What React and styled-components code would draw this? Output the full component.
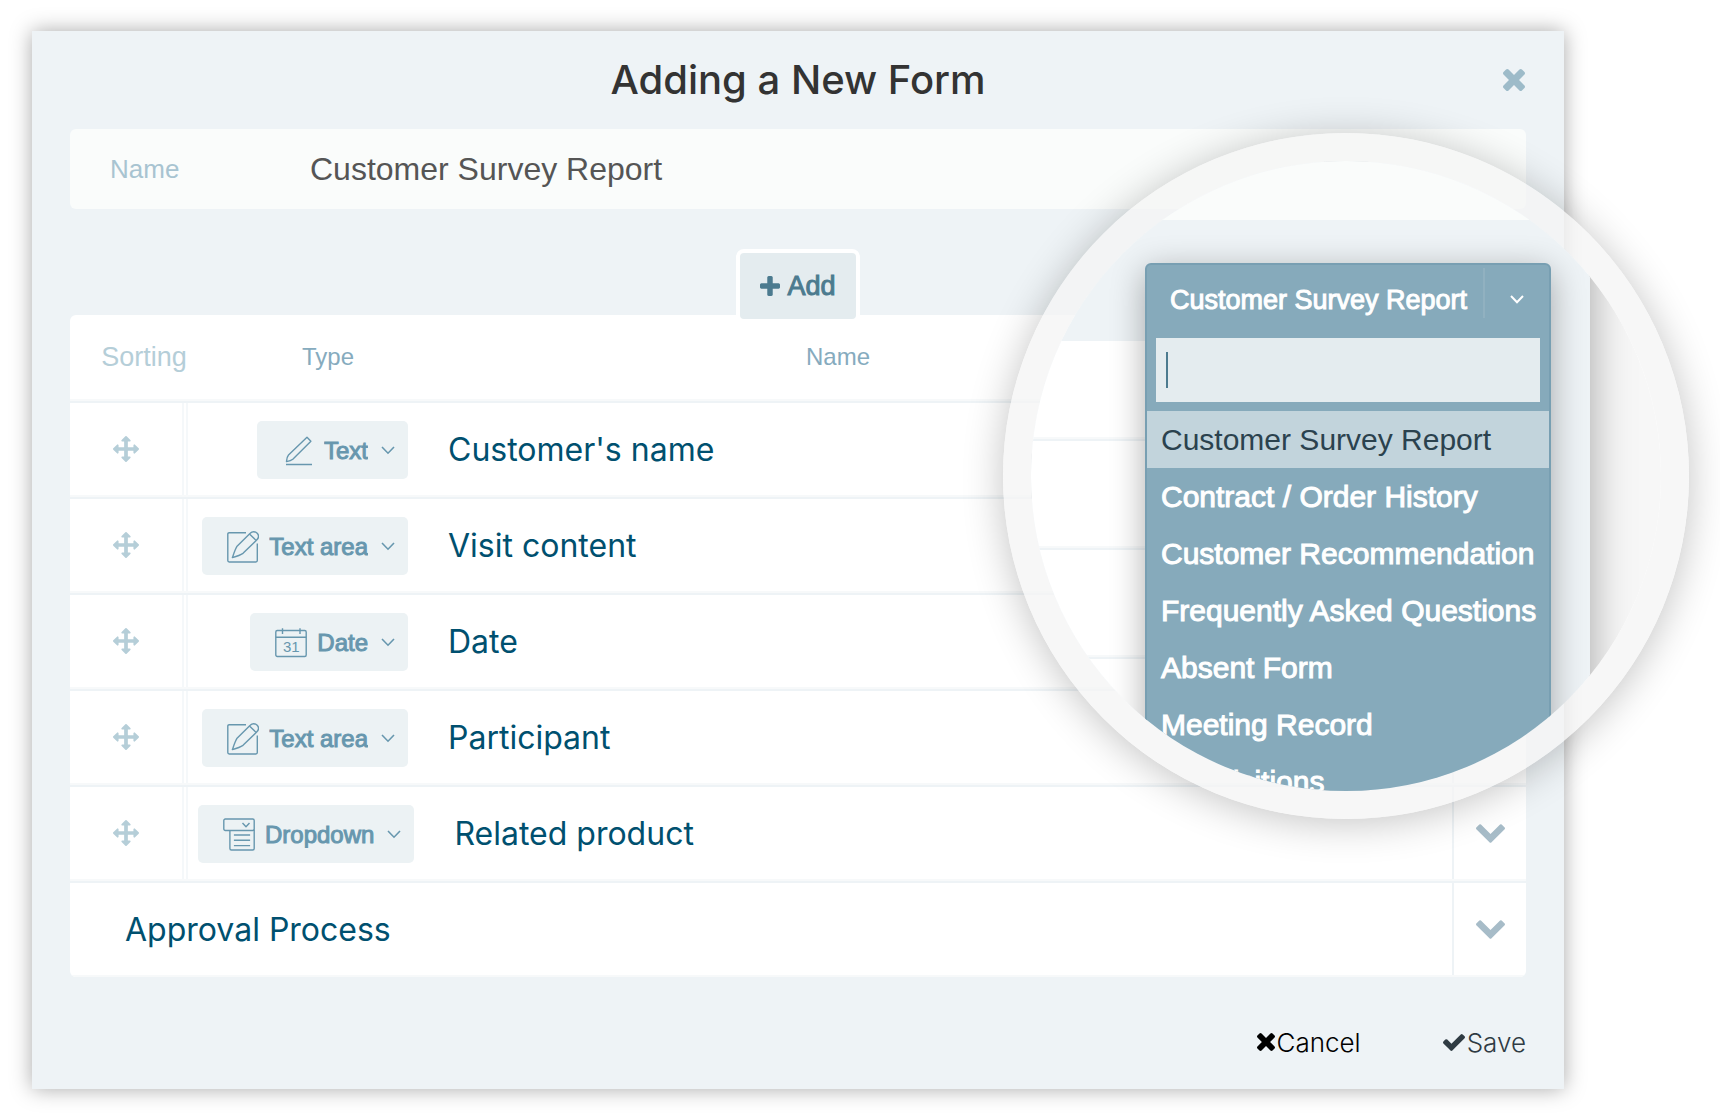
import React from "react";
import styled, { createGlobalStyle } from "styled-components";

const GlobalStyle = createGlobalStyle`
  *, *::before, *::after {
    box-sizing: border-box;
  }
  body {
    margin: 0;
    background: #fff;
    font-family: "Liberation Sans", Arial, sans-serif;
    overflow-x: hidden;
  }
  button, input, select {
    font-family: inherit;
    margin: 0;
    padding: 0;
    border: none;
    background: transparent;
  }
  button {
    cursor: pointer;
  }
`;

const Page = styled.div`
  padding: 31px 156px 31px 32px;
`;

const Modal = styled.form`
  position: relative;
  padding: 0 38px;
  background: #eef3f6;
  box-shadow: 0 0 20px rgba(0, 0, 0, 0.34);
`;

const Header = styled.header`
  display: grid;
  grid-template-columns: 24px 1fr 24px;
  align-items: center;
  height: 98px;
`;

const Title = styled.h1`
  grid-column: 2;
  margin: 0;
  color: #333;
  font-family: Inter, sans-serif;
  font-size: 40px;
  line-height: 48px;
  font-weight: 500;
  text-align: center;
`;

const CloseButton = styled.button`
  display: flex;
  justify-content: center;
  color: #9dbbc9;
`;

const NameField = styled.label`
  display: flex;
  align-items: center;
  height: 80px;
  padding: 0 40px;
  border-radius: 6px;
  background: #fafcfb;
`;

const FieldLabel = styled.span`
  width: 200px;
  color: #a8c4d1;
  font-size: 26px;
`;

const FieldInput = styled.input`
  flex: 1;
  color: #555;
  font-size: 32px;
  outline: none;
`;

const AddButton = styled.button`
  position: relative;
  display: flex;
  align-items: center;
  justify-content: center;
  gap: 7px;
  width: 124px;
  height: 74px;
  margin: 40px auto -8px;
  border: 4px solid #fff;
  border-radius: 8px;
  background: #e4ecef;
  color: #4c7b8f;
  font-size: 27px;
  -webkit-text-stroke: 1px;
`;

const Fields = styled.table`
  display: block;
  border-radius: 6px;
  background: #fff;
  overflow: hidden;

  thead, tbody {
    display: block;
  }
`;

const Row = styled.tr`
  display: flex;
  height: ${({ $head }) => ($head ? 88 : 96)}px;
  padding-bottom: 2px;
  border-bottom: 2px solid #eef3f6;
  box-shadow: inset 0 -2px #f7f9fa;

  &:last-child {
    ${({ $last }) => $last && "height: 94px; border-bottom: none;"}
  }
`;

const HeadCell = styled.th`
  display: flex;
  align-items: center;
  justify-content: center;
  flex: ${({ $width }) => ($width ? `0 0 ${$width}px` : "1")};
  padding: 0;
  color: ${({ $faded }) => ($faded ? "#b5ced8" : "#86abbe")};
  font-size: ${({ $faded }) => ($faded ? 27 : 24)}px;
  font-weight: normal;
`;

const SortCell = styled.td`
  display: flex;
  align-items: center;
  justify-content: center;
  flex: 0 0 118px;
  padding: 0;
  border-right: 6px double #f5f8fa;
  color: #b5ced8;
`;

const TypeCell = styled.td`
  display: flex;
  align-items: center;
  justify-content: flex-end;
  min-width: 220px;
  padding: 2px 0 0 10px;
`;

const NameCell = styled.td`
  display: flex;
  align-items: center;
  flex: 1;
  padding: 0 0 0 ${({ $wide }) => ($wide ? 55 : 40)}px;
  color: #00506f;
  font-family: Inter, sans-serif;
  font-size: 32px;
`;

const ToggleCell = styled.td`
  display: flex;
  flex: 0 0 74px;
  padding: 0;
  border-left: 2px solid #eef3f6;
`;

const ToggleButton = styled.button`
  display: flex;
  align-items: center;
  justify-content: center;
  width: 100%;
  color: #a7bcc8;
`;

const Chip = styled.label`
  display: flex;
  align-items: center;
  height: 58px;
  padding: 0 13px 0 25px;
  border-radius: 5px;
  background: #ecf2f4;
  color: #6797ae;
`;

const ChipSelect = styled.select`
  appearance: none;
  field-sizing: content;
  margin: 0 13px 0 10px;
  color: inherit;
  font-size: 24px;
  -webkit-text-stroke: 1px;
  outline: none;
`;

const Footer = styled.footer`
  display: flex;
  align-items: center;
  justify-content: flex-end;
  gap: 82px;
  height: 112px;
  padding-top: 18px;
`;

const FooterButton = styled.button`
  display: flex;
  align-items: center;
  gap: 2px;
  color: ${({ $color }) => $color};
  font-family: Inter, sans-serif;
  font-size: 26px;
  font-weight: 300;
`;

const Lens = styled.aside`
  position: absolute;
  top: 102px;
  right: -125px;
  width: 686px;
  height: 686px;
  border: 28px solid rgba(244, 244, 244, 0.76);
  border-radius: 50%;
  box-shadow: 0 4px 40px rgba(0, 0, 0, 0.24);
`;

const LensView = styled.div`
  position: relative;
  height: 100%;
  border-radius: 50%;
  background: #f7f7f7;
  overflow: hidden;
`;

const ZoomedModal = styled.div`
  width: 559px;
  height: 100%;
  background: #eef3f6;
  box-shadow: 0 0 40px rgba(0, 0, 0, 0.34);
`;

const ZoomedField = styled.div`
  height: 59px;
  margin-right: 44px;
  background: #fafcfb;
`;

const ZoomedTable = styled.div`
  margin: 121px 44px 0 0;
  background: #fff;
`;

const ZoomedRow = styled.div`
  height: ${({ $head }) => ($head ? 100 : 109)}px;
  border-bottom: 2px solid #eef3f6;
  box-shadow: inset 0 -2px #f7f9fa;
`;

const Dropdown = styled.div`
  position: absolute;
  top: 102px;
  left: 114px;
  width: 406px;
  border: 2px solid #789fb2;
  border-radius: 6px;
  background: #86aabb;
  box-shadow: 0 8px 34px rgba(0, 0, 0, 0.32);
`;

const DropdownHeader = styled.button`
  display: flex;
  align-items: flex-start;
  width: 100%;
  height: 70px;
  padding-top: 3px;
  color: #fff;
`;

const DropdownValue = styled.span`
  flex: 1;
  padding-left: 23px;
  font-size: 27px;
  line-height: 64px;
  text-align: left;
  white-space: nowrap;
  -webkit-text-stroke: 1px;
`;

const DropdownArrow = styled.span`
  display: flex;
  justify-content: center;
  width: 66px;
  height: 50px;
  padding-top: 27px;
  border-left: 2px solid #91b1c0;
`;

const SearchBox = styled.div`
  display: flex;
  align-items: center;
  height: 64px;
  margin: 3px 9px 9px;
  padding: 0 10px;
  background: #e4ecef;
`;

const Caret = styled.i`
  flex: 0 0 2px;
  height: 36px;
  background: #4c7b8f;
`;

const SearchInput = styled.input`
  flex: 1;
  min-width: 0;
  font-size: 30px;
  outline: none;
`;

const Options = styled.ul`
  margin: 0;
  padding: 0;
  list-style: none;
`;

const Option = styled.li`
  height: 57px;
  padding-left: 14px;
  background: ${({ $selected }) => ($selected ? "#c2d4dc" : "transparent")};
  color: ${({ $selected }) => ($selected ? "#2b424e" : "#fff")};
  font-size: 30px;
  line-height: 57px;
  white-space: nowrap;
  -webkit-text-stroke: ${({ $selected }) => ($selected ? 0 : 1)}px;
`;

const TimesIcon = ({ size }) => (
  <svg width={size} height={size} viewBox="302 302 1188 1188" fill="currentColor" aria-hidden="true">
    <path
      transform="translate(0 -64)"
      d="M1490 1322q0 40-28 68l-136 136q-28 28-68 28t-68-28l-294-294-294 294q-28 28-68 28t-68-28l-136-136q-28-28-28-68t28-68l294-294-294-294q-28-28-28-68t28-68l136-136q28-28 68-28t68 28l294 294 294-294q28-28 68-28t68 28l136 136q28 28 28 68t-28 68l-294 294 294 294q28 28 28 68z"
    />
  </svg>
);

const PlusIcon = () => (
  <svg width="20" height="20" viewBox="192 128 1408 1408" fill="currentColor" aria-hidden="true">
    <path d="M1600 736v192q0 40-28 68t-68 28h-416v416q0 40-28 68t-68 28h-192q-40 0-68-28t-28-68v-416h-416q-40 0-68-28t-28-68v-192q0-40 28-68t68-28h416v-416q0-40 28-68t68-28h192q40 0 68 28t28 68v416h416q40 0 68 28t28 68z" />
  </svg>
);

const CheckIcon = () => (
  <svg width="22" height="18" viewBox="121 270 1550 1252" fill="currentColor" aria-hidden="true">
    <path d="M1671 566q0 40-28 68l-724 724-136 136q-28 28-68 28t-68-28l-136-136-362-362q-28-28-28-68t28-68l136-136q28-28 68-28t68 28l294 295 656-657q28-28 68-28t68 28l136 136q28 28 28 68z" />
  </svg>
);

const MoveIcon = () => (
  <svg width="26" height="26" viewBox="0 0 1792 1792" fill="currentColor" aria-hidden="true">
    <path d="M1792 896q0 26-19 45l-256 256q-19 19-45 19t-45-19-19-45v-128h-384v384h128q26 0 45 19t19 45-19 45l-256 256q-19 19-45 19t-45-19l-256-256q-19-19-19-45t19-45 45-19h128v-384h-384v128q0 26-19 45t-45 19-45-19l-256-256q-19-19-19-45t19-45l256-256q19-19 45-19t45 19 19 45v128h384v-384h-128q-26 0-45-19t-19-45 19-45l256-256q19-19 45-19t45 19l256 256q19 19 19 45t-19 45-45 19h-128v384h384v-128q0-26 19-45t45-19 45 19l256 256q19 19 19 45z" />
  </svg>
);

const ChevronIcon = () => (
  <svg width="29" height="19" viewBox="90 533 1612 1035" fill="currentColor" aria-hidden="true">
    <path d="M1683 808l-742 741q-19 19-45 19t-45-19l-742-741q-19-19-19-45.5t19-45.5l166-165q19-19 45-19t45 19l531 531 531-531q19-19 45-19t45 19l166 165q19 19 19 45.5t-19 45.5z" />
  </svg>
);

const AngleIcon = ({ width = 2 }) => (
  <svg width="14" height="9" viewBox="0 0 14 9" fill="none" stroke="currentColor" strokeWidth={width} aria-hidden="true">
    <path d="M1 1l6 6.2L13 1" />
  </svg>
);

const LineIcon = ({ children }) => (
  <svg
    width="32"
    height="33"
    viewBox="0 0 32 33"
    fill="none"
    stroke="currentColor"
    strokeWidth="1.4"
    strokeLinejoin="round"
    aria-hidden="true"
  >
    {children}
  </svg>
);

const icons = {
  Text: (
    <LineIcon>
      <path d="M25 3.3l3.9 4L10.8 25.2C9 26.8 7 27.2 4.5 27.6c.3-2.5.5-5 2-6.6zM4 30.5h26" />
    </LineIcon>
  ),
  "Text area": (
    <LineIcon>
      <path d="M19 2.7H2.2Q.8 2.7.8 4.1v26.5q0 1.400 1.400 1.400h26.700q1.400 0 1.400-1.400V13.500" />
      <path d="M23.200 3.300L9.800 16.600C8 19.500 7 23 5.400 27.600c4.600-1.400 8-2.600 10.600-4.300l13.700-13.200c2-2 2.300-4.800.5-6.900-2-2-5-2-7 .1zM23 4.500l6.200 6" />
    </LineIcon>
  ),
  Date: (
    <LineIcon>
      <rect x="0.8" y="4.5" width="30.4" height="26" rx="1.5" />
      <path d="M.8 11.300h30.400M7.500 2.300v5.800M25 2.300v5.800" />
      <text x="8" y="26" fontSize="15" fill="currentColor" stroke="none">
        31
      </text>
    </LineIcon>
  ),
  Dropdown: (
    <LineIcon>
      <rect x="0.8" y="1" width="30.4" height="11.5" rx="1.5" />
      <path d="M6.900 12.500v18q0 1.500 1.500 1.500h21.300q1.500 0 1.500-1.500v-19M10.900 17h16.200M10.900 22.300h16.200M10.900 27.600h16.200M19.500 5l3.500 3.700L26.500 5" />
    </LineIcon>
  ),
};

const types = Object.keys(icons);

const fields = [
  { type: "Text", name: "Customer's name" },
  { type: "Text area", name: "Visit content" },
  { type: "Date", name: "Date" },
  { type: "Text area", name: "Participant" },
  { type: "Dropdown", name: "Related product" },
];

const forms = [
  "Customer Survey Report",
  "Contract / Order History",
  "Customer Recommendation",
  "Frequently Asked Questions",
  "Absent Form",
  "Meeting Record",
  "Requisitions",
];

const FieldRow = ({ field }) => (
  <Row>
    <SortCell>
      <MoveIcon />
    </SortCell>
    <TypeCell>
      <Chip>
        {icons[field.type]}
        <ChipSelect defaultValue={field.type} aria-label={`Type of ${field.name}`}>
          {types.map((type) => (
            <option key={type}>{type}</option>
          ))}
        </ChipSelect>
        <AngleIcon width={1.6} />
      </Chip>
    </TypeCell>
    <NameCell>{field.name}</NameCell>
    <ToggleCell>
      <ToggleButton type="button" aria-label={`Expand ${field.name}`}>
        <ChevronIcon />
      </ToggleButton>
    </ToggleCell>
  </Row>
);

const FormPicker = () => (
  <Dropdown>
    <DropdownHeader type="button" aria-expanded="true">
      <DropdownValue>{forms[0]}</DropdownValue>
      <DropdownArrow>
        <AngleIcon />
      </DropdownArrow>
    </DropdownHeader>
    <SearchBox>
      <Caret />
      <SearchInput type="text" aria-label="Search forms" />
    </SearchBox>
    <Options role="listbox" aria-label="Forms">
      {forms.map((form, i) => (
        <Option key={form} role="option" aria-selected={i === 0} $selected={i === 0}>
          {form}
        </Option>
      ))}
    </Options>
  </Dropdown>
);

const App = () => {
  return (
    <Page>
      <GlobalStyle />
      <Modal onSubmit={(e) => e.preventDefault()}>
        <Header>
          <Title>Adding a New Form</Title>
          <CloseButton type="button" aria-label="Close">
            <TimesIcon size={22} />
          </CloseButton>
        </Header>

        <NameField>
          <FieldLabel>Name</FieldLabel>
          <FieldInput type="text" defaultValue="Customer Survey Report" />
        </NameField>

        <AddButton type="button">
          <PlusIcon />
          Add
        </AddButton>

        <Fields>
          <thead>
            <Row $head>
              <HeadCell $width={148} $faded>
                Sorting
              </HeadCell>
              <HeadCell $width={220}>Type</HeadCell>
              <HeadCell>Name</HeadCell>
              <HeadCell $width={288} />
            </Row>
          </thead>
          <tbody>
            {fields.map((field) => (
              <FieldRow key={field.name} field={field} />
            ))}
            <Row $last>
              <NameCell $wide>Approval Process</NameCell>
              <ToggleCell>
                <ToggleButton type="button" aria-label="Expand Approval Process">
                  <ChevronIcon />
                </ToggleButton>
              </ToggleCell>
            </Row>
          </tbody>
        </Fields>

        <Footer>
          <FooterButton type="button" $color="#000">
            <TimesIcon size={18} />
            Cancel
          </FooterButton>
          <FooterButton type="submit" $color="#2f3b43">
            <CheckIcon />
            Save
          </FooterButton>
        </Footer>

        <Lens>
          <LensView>
            <ZoomedModal>
              <ZoomedField />
              <ZoomedTable>
                <ZoomedRow $head />
                <ZoomedRow />
                <ZoomedRow />
                <ZoomedRow />
              </ZoomedTable>
            </ZoomedModal>
            <FormPicker />
          </LensView>
        </Lens>
      </Modal>
    </Page>
  );
};

export default App;
